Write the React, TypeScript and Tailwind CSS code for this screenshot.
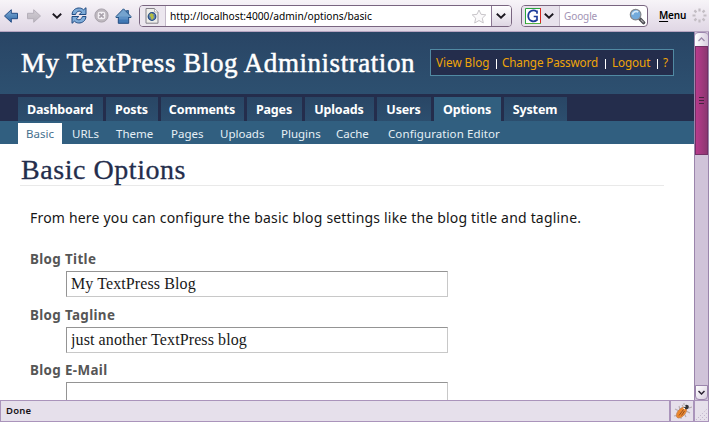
import React from "react";

const tabs = [
  { label: "Dashboard", box: "w-[85px]" },
  { label: "Posts", box: "w-[52px]" },
  { label: "Comments", box: "w-[83px]" },
  { label: "Pages", box: "w-[55px]" },
  { label: "Uploads", box: "w-[69px]" },
  { label: "Users", box: "w-[54px]" },
  { label: "Options", box: "w-[67px]" },
  { label: "System", box: "w-[63px]" },
];

const subTabs = [
  { label: "URLs", box: "w-[44px]" },
  { label: "Theme", box: "w-[55px]" },
  { label: "Pages", box: "w-[49px]" },
  { label: "Uploads", box: "w-[61px]" },
  { label: "Plugins", box: "w-[55px]" },
  { label: "Cache", box: "w-[52px]" },
  { label: "Configuration Editor", box: "w-[130px]" },
];

function Arrow({ muted = false }: { muted?: boolean }) {
  return (
    <svg width="16" height="14" viewBox="0 0 16 14" className={muted ? "-scale-x-100" : ""}>
      <defs>
        <linearGradient id={muted ? "arrowGrey" : "arrowBlue"} x2="0" y2="1">
          <stop stopColor={muted ? "#d2cdd4" : "#82afd8"} />
          <stop offset="1" stopColor={muted ? "#b9b4bd" : "#2c66a5"} />
        </linearGradient>
      </defs>
      <path
        d="M1.5 7 8.3.7v3.6h6.2v5.4H8.3v3.6Z"
        fill={muted ? "url(#arrowGrey)" : "url(#arrowBlue)"}
        stroke={muted ? "#b5afb9" : "#234d86"}
        strokeLinejoin="round"
      />
    </svg>
  );
}

function Chevron() {
  return (
    <svg width="10" height="6" viewBox="0 0 10 6" fill="none" stroke="#1c1820" strokeWidth="1.9">
      <path d="M.8.7 5 4.6 9.2.7" />
    </svg>
  );
}

function Reload() {
  return (
    <svg width="16" height="17" viewBox="0 0 16 17" fill="#7eabd8" stroke="#204b82" strokeWidth="1" strokeLinejoin="round">
      <path d="M1 7.5C1.3 3.2 4.7.8 8.4 1c1.9.1 3.1.8 4.1 1.8L15 .7v6.8H8.2l2.4-2.4C8.3 3.2 5.4 4.4 4.6 7.5Z" />
      <path d="M15 9.5c-.3 4.3-3.7 6.7-7.4 6.5-1.9-.1-3.1-.8-4.1-1.8L1 16.3V9.5h6.8l-2.4 2.4c2.3 1.9 5.2.7 6-2.4Z" />
    </svg>
  );
}

function Stop() {
  return (
    <svg width="15" height="15" viewBox="0 0 15 15">
      <circle cx="7.5" cy="7.5" r="6.6" fill="#bdb7be" stroke="#a9a3ac" />
      <rect x="3.7" y="3.7" width="7.6" height="7.6" rx="2" fill="#f5f2f6" />
      <path d="m5.3 5.3 4.4 4.4m0-4.4L5.3 9.7" stroke="#aaa3ad" strokeWidth="1.7" />
    </svg>
  );
}

function Home() {
  return (
    <svg width="17" height="16" viewBox="0 0 17 16">
      <path d="M11.5 2.5h2V7h-2z" fill="#4a80b7" stroke="#265487" strokeWidth=".8" />
      <path d="M3.3 8h10.4v7.3H3.3z" fill="#4179b5" stroke="#234d82" />
      <path d="M8.5.8 1 8.5v1h15v-1Z" fill="#74a3ce" stroke="#265487" strokeLinejoin="round" />
      <path d="M4 8.5h9v3H4z" fill="#5c90c5" />
    </svg>
  );
}

function SiteIcon() {
  return (
    <svg width="14" height="16" viewBox="0 0 14 16">
      <path d="M1 .5h8.5l3.5 3.5v11.2H1V.5Z" fill="#eeeeea" stroke="#85838a" />
      <path d="M9.5.7V4H13" fill="#fff" stroke="#999" strokeWidth=".7" />
      <circle cx="7" cy="8.5" r="3.8" fill="#6183b4" stroke="#284e83" strokeWidth="1.2" />
      <path d="m4.3 7 2-2 1 1 1.7.2-1 1.6 1.2 1.2-1.8 2.7-1-.3-.5-2Z" fill="#b2bd42" />
    </svg>
  );
}

function Star() {
  return (
    <svg width="16" height="15" viewBox="0 0 16 15">
      <path d="m8 1 2 4.3 4.8.5-3.5 3.4 1 4.7L8 11.5 3.7 14l1-4.8L1.2 5.8 6 5.3Z" fill="#fbfafb" stroke="#c8c5c9" strokeLinejoin="round" />
    </svg>
  );
}

function GoogleMark() {
  return (
    <svg width="16" height="16" viewBox="0 0 16 16" fill="none">
      <path d="M0 0h16v16H0z" fill="#fff" />
      <path d="M.5 16V.5H15" stroke="#28a53c" />
      <path d="M15.5 0v15" stroke="#d82820" />
      <path d="M1 15.5h15" stroke="#55b344" />
      <path d="M12 3.7c-4.2-3-9-.2-8.8 4.5.2 4.5 5.2 6.7 8.8 3.8V8.5H8.7M12 2.5v3.2" stroke="#1d3c9a" strokeWidth="1.7" />
    </svg>
  );
}

function Magnifier() {
  return (
    <svg width="17" height="17" viewBox="0 0 17 17">
      <path d="m10.8 10.8 3.8 3.8" stroke="#4b4b51" strokeWidth="3.4" strokeLinecap="round" />
      <path d="m11.8 11.6 2.8 2.8" stroke="#b5b5b9" strokeWidth="1.1" />
      <circle cx="6.6" cy="6.6" r="5.3" fill="#73aadb" stroke="#85868b" strokeWidth="1.2" />
      <path d="M3.5 6.6C4 3.8 7.1 2.7 9.2 4" stroke="#d6e9f8" strokeWidth="1.8" fill="none" />
    </svg>
  );
}

function Throbber() {
  return (
    <svg width="15" height="15" viewBox="0 0 15 15" fill="none" stroke="#c3bdc4" strokeWidth="2.2">
      <path d="M7.5.5v3m0 8v3M.5 7.5h3m8 0h3M2.4 2.4l2 2m6.2 6.2 2 2m0-10.2-2 2m-6.2 6.2-2 2" />
    </svg>
  );
}

function Bug() {
  return (
    <svg width="19" height="19" viewBox="0 0 19 19">
      <path d="m6 9-4-2m5 1-1-4m5 2-2-3m2 1 0-3m5 5 3-1m-6 4 4 2m-6 0 2 4m-5-2 0 4m-2-4-5 1" stroke="#b5abae" strokeWidth="1.1" fill="none" />
      <ellipse cx="8.5" cy="10.5" rx="6.6" ry="3.6" transform="rotate(-48 8.5 10.5)" fill="#ed882d" stroke="#c3865a" strokeWidth=".8" />
      <path d="M6 13.5 10.5 7.5m-2 6 3-4.5" stroke="#8a4a1e" strokeWidth=".9" />
      <ellipse cx="13.3" cy="5" rx="2.6" ry="2.2" fill="#333236" />
      <path d="M10.5 3.6 12.5 4.5M10.5 6l1.4.8" stroke="#fff" strokeWidth="1.4" />
    </svg>
  );
}

function Toolbar() {
  return (
    <div className="flex h-8 shrink-0 border-b border-[#b6a5c1] bg-linear-to-b from-[#f7f4f8] to-[#e0d7e5]">
      <div className="flex w-[139px] items-center pl-[3px]">
        <Arrow />
        <span className="ml-[7px]"><Arrow muted /></span>
        <span className="ml-[10px]"><Chevron /></span>
        <span className="ml-[9px]"><Reload /></span>
        <span className="ml-[7px]"><Stop /></span>
        <span className="ml-[6px]"><Home /></span>
      </div>
      <div className="mt-[5px] flex h-[22px] w-[373px] overflow-hidden rounded border border-[#796580] bg-white">
        <div className="flex w-[26px] items-center justify-center border-r border-[#c4bac9] bg-[#ece7ef]"><SiteIcon /></div>
        <span className="w-[306px] pl-1 text-[10.2px] leading-5 tracking-[0.01px] whitespace-nowrap">http://localhost:4000/admin/options/basic</span>
        <span className="flex w-[20px] items-center"><Star /></span>
        <div className="flex w-5 shrink-0 items-center justify-center border-l border-[#8b7693] bg-linear-to-b from-white to-[#ded6e3]"><Chevron /></div>
      </div>
      <div className="mt-[5px] ml-[9px] flex h-[22px] w-[127px] items-center overflow-hidden rounded border border-[#796580] bg-white">
        <div className="flex h-full w-[38px] items-center justify-between border-r border-[#c4bac9] bg-[#e8e2ec] pr-[5px] pl-[3px]"><GoogleMark /><Chevron /></div>
        <span className="w-[69px] pl-1 text-[10px] leading-5 tracking-[-0.1px] text-[#a294b4]">Google</span>
        <Magnifier />
      </div>
      <div className="ml-[11px] pt-[6px] text-[10px] leading-[18px] font-semibold tracking-[-0.2px] whitespace-nowrap"><span className="underline underline-offset-2">M</span>enu</div>
      <div className="ml-auto pt-2 pr-[2px]"><Throbber /></div>
    </div>
  );
}

function AdminHeader() {
  return (
    <header>
      <div className="flex h-[62px] items-start bg-linear-to-b from-[#294565] to-[#2d5070] text-white">
        <h1 className="w-[430px] pt-[13px] pl-[21px] font-['Liberation_Serif',serif] text-[27px] leading-[36px] tracking-[0.55px] whitespace-nowrap [-webkit-text-stroke:0.5px_white]">My TextPress Blog Administration</h1>
        <div className="mt-[17px] flex h-[27px] w-[244px] items-center border border-[#518aa3] bg-[#242d4c] pl-[5px] text-[11.7px] text-[#efa509]">
          <span className="w-[60px] whitespace-nowrap">View Blog</span><i className="mt-[2px] h-[10px] w-px bg-white" />
          <span className="ml-[5px] w-[103px] tracking-[-0.14px] whitespace-nowrap">Change Password</span><i className="mt-[2px] h-[10px] w-px bg-white" />
          <span className="ml-[6px] w-[45px] tracking-[-0.1px]">Logout</span><i className="mt-[2px] h-[10px] w-px bg-white" />
          <span className="ml-[5px]">?</span>
        </div>
      </div>
      <nav className="flex h-[27px] gap-[3px] bg-[#242d4c] pt-[3px] pl-[18px] text-[12.5px] font-bold tracking-[-0.15px] text-white">
        {tabs.map((tab) => (
          <a key={tab.label} className={`${tab.box} pr-px text-center leading-[25px] ${tab.label === "Options" ? "bg-[#315f7f]" : "bg-linear-to-b from-[#294665] to-[#2c4e6e]"}`}>{tab.label}</a>
        ))}
      </nav>
      <nav className="flex h-[23px] bg-[#315f80] pl-[18px] text-[11.5px] text-[#e6f0f6]">
        <a className="mt-[2px] mr-[10px] w-[44px] bg-white pl-2 leading-[22px] text-[#456f8d]">Basic</a>
        {subTabs.map((tab) => (
          <a key={tab.label} className={`${tab.box} leading-[26px] whitespace-nowrap ${tab.label === "Configuration Editor" ? "tracking-[0.1px]" : ""}`}>{tab.label}</a>
        ))}
      </nav>
    </header>
  );
}

function Field({ label, value = "" }: { label: string; value?: string }) {
  return (
    <label className="block h-[55.5px]">
      <span className="block h-[21px] text-[13.4px] leading-[18px] font-bold tracking-[0.35px] whitespace-nowrap text-[#565656]">{label}</span>
      <input readOnly value={value} className="ml-9 block h-[26px] w-[382px] border border-t-[#949494] border-r-[#c8c8c8] border-b-[#c8c8c8] border-l-[#949494] bg-white px-1 font-['Liberation_Serif',serif] text-[16px] leading-6 tracking-[0.1px] text-[#181818] outline-none" />
    </label>
  );
}

function ScrollBar() {
  return (
    <div className="flex w-[15px] shrink-0 flex-col border-x border-[#9b85ac] bg-[#d0c3d9]">
      <div className="flex h-[14px] items-center justify-center rounded-t border-t border-[#9b85ac] bg-linear-to-r from-white to-[#d9cfe0]">
        <svg width="7" height="5" viewBox="0 0 7 5"><path d="m.5 4 3-3 3 3" fill="none" stroke="#9c89aa" strokeWidth="1.3" /></svg>
      </div>
      <div className="flex h-[109px] flex-col items-center justify-center gap-[2px] border border-[#743065] bg-linear-to-r from-[#b83a8c] to-[#8c3771]">
        <i className="h-px w-[5px] bg-[#45243f]" /><i className="h-px w-[5px] bg-[#45243f]" /><i className="h-px w-[5px] bg-[#45243f]" />
      </div>
      <div className="mt-auto flex h-[15px] items-center justify-center rounded-b border border-[#9b85ac] bg-linear-to-br from-white to-[#d9cfe0]"><svg width="7" height="5" viewBox="0 0 7 5"><path d="m.5 1 3 3 3-3" fill="none" stroke="#2b2232" strokeWidth="1.5" /></svg></div>
    </div>
  );
}

export default function App() {
  return (
    <div className="flex h-[422px] w-[709px] flex-col overflow-hidden bg-white font-['Noto_Sans',sans-serif]">
      <Toolbar />
      <div className="flex h-[368px] shrink-0">
        <div className="w-[694px] overflow-hidden">
          <AdminHeader />
          <main>
            <h2 className="ml-[20px] h-[42px] w-[644px] border-b border-[#e9e9e9] pt-[7px] pl-[1px] font-['Liberation_Serif',serif] text-[28px] leading-[37px] tracking-[0.55px] text-[#242d4c] [-webkit-text-stroke:0.3px_#242d4c]">Basic Options</h2>
            <p className="ml-[30px] pt-[21px] text-[14px] leading-[22px] tracking-[0.19px] whitespace-nowrap text-[#161616]">From here you can configure the basic blog settings like the blog title and tagline.</p>
            <form className="mt-[21px] ml-[30px]">
              <Field label="Blog Title" value="My TextPress Blog" />
              <Field label="Blog Tagline" value="just another TextPress blog" />
              <Field label="Blog E-Mail" />
            </form>
          </main>
        </div>
        <ScrollBar />
      </div>
      <footer className="flex h-[22px] shrink-0 bg-[#e6e0eb] text-[9.5px] font-semibold text-[#171318]">
        <div className="w-[670px] border border-[#aa94bb] pl-[5px] leading-[19px] tracking-[0.2px]">Done</div>
        <div className="flex w-[24px] items-center justify-center border border-[#aa94bb]"><Bug /></div>
        <div className="flex flex-1 items-end justify-end border border-[#aa94bb]">
          <svg width="13" height="13" viewBox="0 0 13 13" stroke="#b6a6c3" strokeDasharray="1 2"><path d="M1 12 12 1M5 12l7-7M9 12l3-3" /></svg>
        </div>
      </footer>
    </div>
  );
}
